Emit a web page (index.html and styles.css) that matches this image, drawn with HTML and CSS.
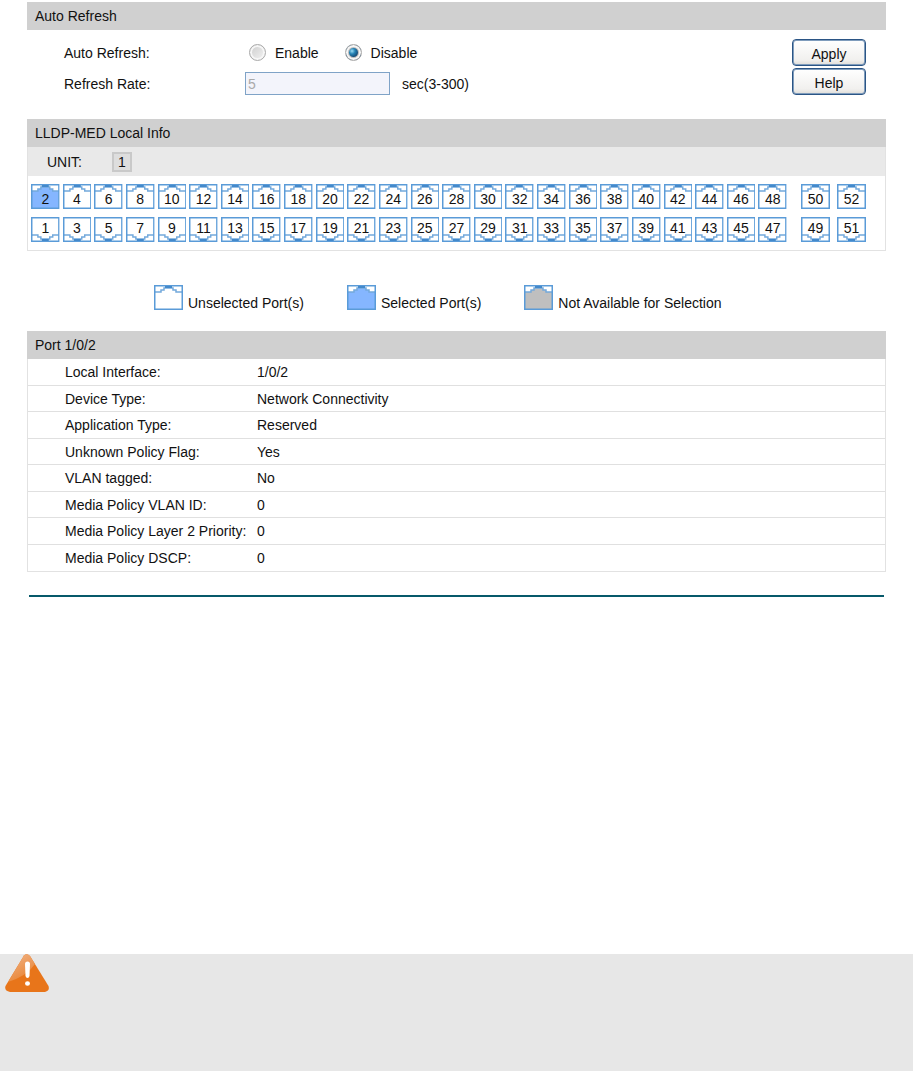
FILE: index.html
```html
<!DOCTYPE html>
<html lang="en">
<head>
    <meta charset="UTF-8">
    <meta name="viewport" content="width=device-width, initial-scale=1.0">
    <title>LLDP-MED Local Info</title>
    <link rel="stylesheet" href="styles.css">
</head>
<body>

    <!-- Port shapes, reused by the panel and the legend -->
    <svg class="defs" aria-hidden="true">
        <symbol id="port" viewBox="0 0 29 25" preserveAspectRatio="none">
            <rect class="port-frame" x="0" y="0" width="29" height="25" />
            <path class="port-body" d="M1 7H7V5H10V3H12V1H17V3H19V5H22V7H28V24H1Z" />
            <path class="port-step" d="M1 7H7V5H10V3H19V5H22V7H28" />
            <path class="port-edge" d="M.75 .75H28.250V24.250H.75Z" />
            <path class="port-latch" d="M11 2H18" />
        </symbol>
    </svg>

    <main>
        <!-- Auto Refresh -->
        <section class="panel">
            <h2>Auto Refresh</h2>
            <form class="refresh-form" id="refreshForm">
                <div class="fields">
                    <div class="field">
                        <span class="field-name" id="autoLabel">Auto Refresh:</span>
                        <div class="radios" role="radiogroup" aria-labelledby="autoLabel">
                            <label><input type="radio" name="auto" value="enable">Enable</label>
                            <label><input type="radio" name="auto" value="disable" checked>Disable</label>
                        </div>
                    </div>
                    <div class="field">
                        <label class="field-name" for="rate">Refresh Rate:</label>
                        <input type="text" class="rate" id="rate" value="5" disabled>
                        <span class="unit-hint">sec(3-300)</span>
                    </div>
                </div>
                <div class="actions">
                    <button type="submit">Apply</button>
                    <button type="button">Help</button>
                </div>
            </form>
        </section>

        <!-- Port selection -->
        <section class="panel bordered">
            <h2>LLDP-MED Local Info</h2>
            <div class="unit-row">
                <span>UNIT:</span>
                <button type="button" class="unit">1</button>
            </div>
            <div class="ports">
                <div class="port-group main-ports" id="mainPorts"></div>
                <div class="port-group uplink-ports" id="uplinkPorts"></div>
            </div>
        </section>

        <ul class="legend">
            <li><svg class="port-icon"><use href="#port" /></svg>Unselected Port(s)</li>
            <li><svg class="port-icon selected"><use href="#port" /></svg>Selected Port(s)</li>
            <li><svg class="port-icon unavailable"><use href="#port" /></svg>Not Available for Selection</li>
        </ul>

        <!-- Port details -->
        <section class="panel bordered">
            <h2>Port 1/0/2</h2>
            <table>
                <tr><th scope="row">Local Interface:</th><td>1/0/2</td></tr>
                <tr><th scope="row">Device Type:</th><td>Network Connectivity</td></tr>
                <tr><th scope="row">Application Type:</th><td>Reserved</td></tr>
                <tr><th scope="row">Unknown Policy Flag:</th><td>Yes</td></tr>
                <tr><th scope="row">VLAN tagged:</th><td>No</td></tr>
                <tr><th scope="row">Media Policy VLAN ID:</th><td>0</td></tr>
                <tr><th scope="row">Media Policy Layer 2 Priority:</th><td>0</td></tr>
                <tr><th scope="row">Media Policy DSCP:</th><td>0</td></tr>
            </table>
        </section>

        <hr>
    </main>

    <footer>
        <svg class="warning" viewBox="0 0 44 38" role="img" aria-label="Warning">
            <defs>
                <linearGradient id="shine" x1="0.2" y1="0" x2="0.7" y2="1">
                    <stop offset="0" stop-color="#f0b183" />
                    <stop offset="1" stop-color="#e8812e" />
                </linearGradient>
            </defs>
            <path d="M19 1.500Q22 -1 25 2L43.500 32Q45 37 40 38H5Q-1 37 .5 32Z" fill="#e8751a" />
            <path d="M19 1.500Q22 -1 25 2L30 10Q22 22 3 28Z" fill="url(#shine)" />
            <path d="M20 10Q20 7.500 22.500 7.500T25 10L24.500 22Q24 24 22.500 24T20.500 22Z" fill="#fff" />
            <ellipse cx="22.500" cy="29.500" rx="2.500" ry="2.300" fill="#fff" />
        </svg>
    </footer>

    <script>
        // Fill a group with ports: even numbers on top, odd numbers below
        function addPorts(groupId, first, last) {
            const group = document.getElementById(groupId);
            for (const start of [first + 1, first]) {
                for (let n = start; n <= last; n += 2) {
                    const port = document.createElement('button');
                    port.type = 'button';
                    port.className = 'port' + (n % 2 ? ' lower' : '') + (n === 2 ? ' selected' : '');
                    port.innerHTML = `<svg><use href="#port" /></svg><span>${n}</span>`;
                    group.appendChild(port);
                }
            }
        }

        addPorts('mainPorts', 1, 48);
        addPorts('uplinkPorts', 49, 52);

        document.getElementById('refreshForm').addEventListener('submit', function (event) {
            event.preventDefault();
        });
    </script>

</body>
</html>
```
FILE: styles.css
```css
/* Basic Reset */
* {
    margin: 0;
    padding: 0;
    box-sizing: border-box;
}

body {
    display: flex;
    flex-direction: column;
    min-height: 100vh;
    font-family: "Liberation Sans", Arial, sans-serif;
    font-size: 14px;
    line-height: 18px;
    color: #111;
    background: #fff;
}

button,
input {
    font: inherit;
    color: inherit;
}

.defs {
    display: none;
}

main {
    flex: 1;
    padding: 2px 27px 0;
}

/* Panels */
.panel h2 {
    padding: 5px 8px;
    font-size: 14px;
    line-height: 18px;
    font-weight: normal;
    background: #d0d0d0;
}

.bordered {
    border: 1px solid #e2e2e2;
    border-top: none;
}

.bordered h2 {
    margin: 0 -1px;
}

/* Auto Refresh form */
.refresh-form {
    display: flex;
    justify-content: space-between;
    padding: 7px 20px 20px 37px;
}

.field {
    display: flex;
    align-items: center;
    height: 31px;
}

.field-name {
    width: 181px;
}

.radios {
    display: flex;
    gap: 26px;
    padding-left: 4px;
}

.radios label {
    display: flex;
    align-items: center;
    gap: 9px;
}

.radios input {
    appearance: none;
    width: 17px;
    height: 17px;
    border: 1px solid #aaa;
    border-radius: 50%;
    background: linear-gradient(135deg, #ccc, #f4f4f4);
    box-shadow: inset 0 0 0 2px #f6f6f6;
}

.radios input:checked {
    background: radial-gradient(circle at 6px 6px, #9bdcf4 0, #2583b5 3px, #123e68 7px);
    box-shadow: inset 0 0 0 2px #f6f6f6, inset 0 0 0 3px #bbb;
}

.rate {
    width: 145px;
    height: 23px;
    padding: 0 2px;
    border: 1px solid #7fa3c7;
    background: #f3f4fb;
    color: #aaa;
}

.unit-hint {
    margin-left: 12px;
}

.actions {
    display: flex;
    flex-direction: column;
    gap: 2px;
    padding-top: 2px;
}

.actions button {
    width: 74px;
    height: 27px;
    padding-top: 3px;
    border: 1px solid #2b5585;
    border-radius: 4px;
    background: linear-gradient(#fff, #f1f0ee 80%, #dedcd8);
    box-shadow: inset 0 0 0 1px #7f9cbc;
}

/* Unit row */
.unit-row {
    display: flex;
    align-items: center;
    gap: 30px;
    height: 29px;
    padding-left: 19px;
    background: #e9e9e9;
}

.unit {
    width: 20px;
    height: 20px;
    border: 2px solid #c9c9c9;
    background: #dedede;
    line-height: 16px;
}

/* Ports */
.ports {
    display: flex;
    gap: 14px;
    padding: 8px 19px 8px 3px;
}

.port-group {
    display: grid;
    row-gap: 8px;
}

.main-ports {
    flex: 1;
    grid-template-columns: repeat(24, 1fr);
    column-gap: 3px;
}

.uplink-ports {
    grid-template-columns: repeat(2, 29px);
    column-gap: 7px;
}

.port {
    display: grid;
    height: 25px;
    border: none;
    background: none;
}

.port svg,
.port span {
    grid-area: 1 / 1;
}

.port svg {
    width: 100%;
    height: 25px;
}

.port span {
    z-index: 1;
    padding-top: 6px;
}

.lower svg {
    transform: scaleY(-1);
}

.port.lower span {
    padding-top: 2px;
}

.port-frame {
    fill: #fff;
}

.port-body {
    fill: var(--port-fill, #fff);
}

.port-step,
.port-edge,
.port-latch {
    fill: none;
    stroke: #73a9dc;
    stroke-width: 1.5;
}

.port-edge {
    stroke: #5a9bd8;
}

.port-latch {
    stroke: #4389cb;
    stroke-width: 2;
}

.selected {
    --port-fill: #85b6ff;
}

.unavailable {
    --port-fill: #bfbfbf;
}

/* Legend */
.legend {
    display: flex;
    gap: 43px;
    padding: 34px 0 19px 127px;
    list-style: none;
}

.legend li {
    display: flex;
    align-items: flex-end;
    gap: 5px;
    height: 27px;
}

.port-icon {
    width: 29px;
    height: 25px;
    align-self: flex-start;
}

/* Port details */
table {
    width: 100%;
    border-spacing: 0;
}

tr {
    height: 27px;
}

tr:nth-child(even) {
    height: 26px;
}

th,
td {
    border-bottom: 1px solid #e0e0e0;
    text-align: left;
    font-weight: normal;
}

tr:last-child th,
tr:last-child td {
    border-bottom: none;
}

th {
    width: 229px;
    padding-left: 37px;
    white-space: nowrap;
}

hr {
    margin: 23px 2px 0;
    border: none;
    border-top: 2px solid #07596a;
}

/* Footer */
footer {
    height: 117px;
    padding-left: 5px;
    background: #e7e7e7;
}

.warning {
    display: block;
    width: 44px;
    height: 38px;
}
```
